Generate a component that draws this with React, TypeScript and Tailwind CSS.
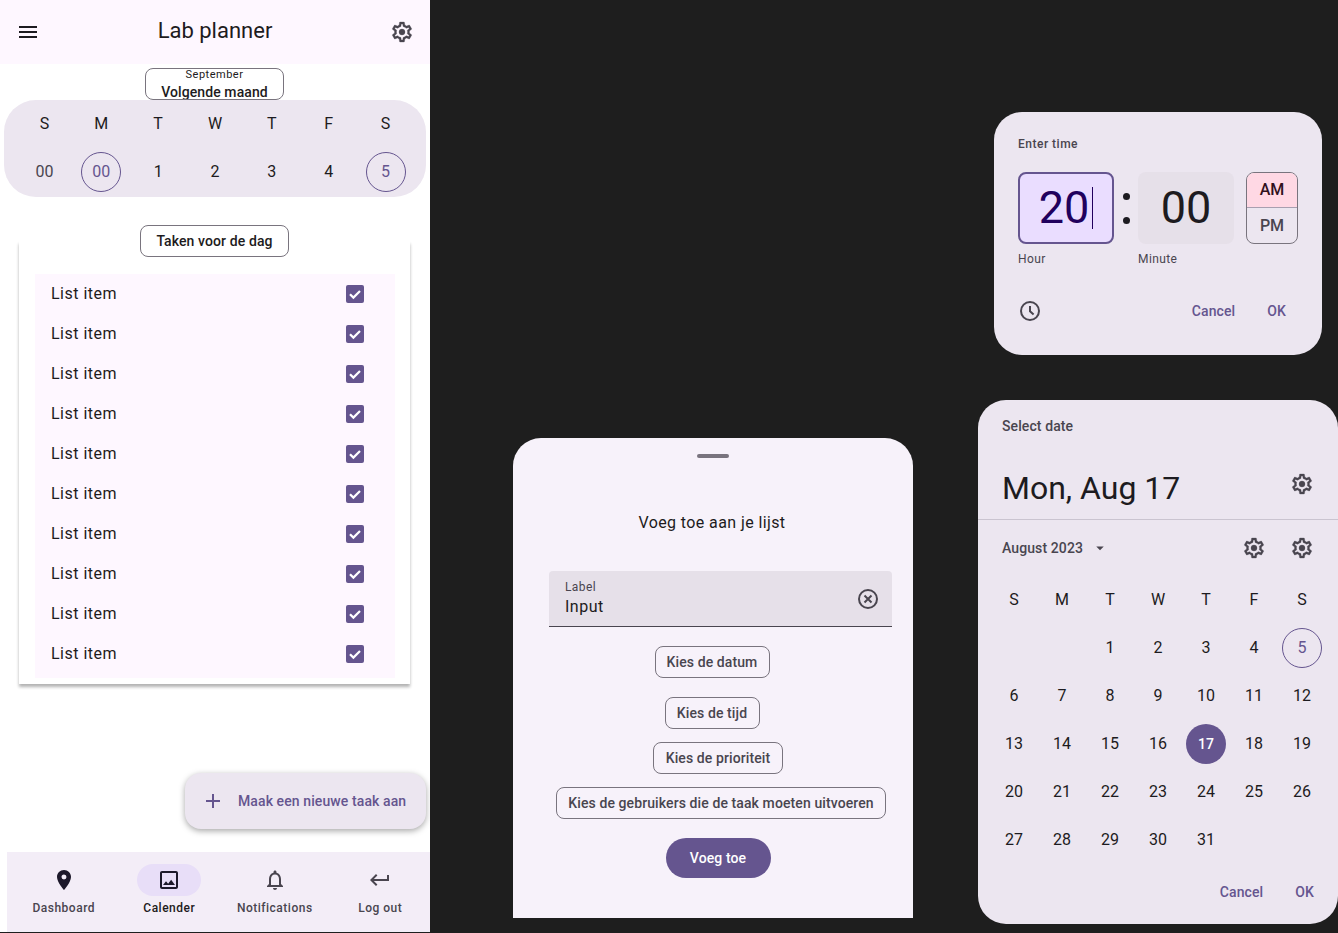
import {
  MdAdd,
  MdArrowDropDown,
  MdKeyboardReturn,
  MdMenu,
  MdOutlineImage,
  MdOutlineNotifications,
  MdPlace,
} from "react-icons/md";

const WEEK = ["S", "M", "T", "W", "T", "F", "S"];
const ITEMS = Array.from({ length: 10 }, (_, i) => i);
const MONTH = [
  "", "", 1, 2, 3, 4, 5,
  6, 7, 8, 9, 10, 11, 12,
  13, 14, 15, 16, 17, 18, 19,
  20, 21, 22, 23, 24, 25, 26,
  27, 28, 29, 30, 31, "", "",
];

// settings icon with a solid hub, like the one in the M3 kit
function Gear({ className = "" }: { className?: string }) {
  return (
    <svg viewBox="0 0 24 24" width={24} height={24} fill="currentColor" stroke="currentColor" strokeWidth={0.3} className={`text-[#49454f] ${className}`}>
      <path d="M19.43 12.98c.04-.32.07-.64.07-.98 0-.34-.03-.66-.07-.98l2.11-1.65c.19-.15.24-.42.12-.64l-2-3.46a.5.5 0 0 0-.61-.22l-2.49 1c-.52-.4-1.08-.73-1.69-.98l-.38-2.65A.488.488 0 0 0 14 2h-4c-.25 0-.46.18-.49.42l-.38 2.65c-.61.25-1.17.59-1.69.98l-2.49-1a.566.566 0 0 0-.18-.03c-.17 0-.34.09-.43.25l-2 3.46c-.13.22-.07.49.12.64l2.11 1.65c-.04.32-.07.65-.07.98 0 .33.03.66.07.98l-2.11 1.65c-.19.15-.24.42-.12.64l2 3.46a.5.5 0 0 0 .61.22l2.49-1c.52.4 1.08.73 1.69.98l.38 2.65c.03.24.24.42.49.42h4c.25 0 .46-.18.49-.42l.38-2.65c.61-.25 1.17-.59 1.69-.98l2.49 1c.06.02.12.03.18.03.17 0 .34-.09.43-.25l2-3.46c.12-.22.07-.49-.12-.64l-2.11-1.65zm-1.98-1.71c.04.31.05.52.05.73 0 .21-.02.43-.05.73l-.14 1.13.89.7 1.08.84-.7 1.21-1.27-.51-1.04-.42-.9.68c-.43.32-.84.56-1.25.73l-1.06.43-.16 1.13-.2 1.35h-1.4l-.19-1.35-.16-1.13-1.06-.43c-.43-.18-.83-.41-1.23-.71l-.91-.7-1.06.43-1.27.51-.7-1.21 1.08-.84.89-.7-.14-1.13c-.03-.31-.05-.54-.05-.74s.02-.43.05-.73l.14-1.13-.89-.7-1.08-.84.7-1.21 1.27.51 1.04.42.9-.68c.43-.32.84-.56 1.25-.73l1.06-.43.16-1.13.2-1.35h1.39l.19 1.35.16 1.13 1.06.43c.43.18.83.41 1.23.71l.91.7 1.06-.43 1.27-.51.7 1.21-1.07.85-.89.7.14 1.13z" />
      <circle cx="12" cy="12" r="3" />
    </svg>
  );
}

function Check() {
  return (
    <svg viewBox="0 0 18 18" width={18} height={18} fill="none" stroke="white" strokeWidth={2.2}>
      <path d="M4 9.2l3.4 3.4L14 6" />
    </svg>
  );
}

function ClockIcon() {
  return (
    <svg viewBox="0 0 24 24" width={24} height={24} fill="none" stroke="#49454f" strokeWidth={2}>
      <circle cx="12" cy="12" r="9" />
      <path d="M12 7v5.2l3.6 3.2" />
    </svg>
  );
}

function ClearIcon() {
  return (
    <svg viewBox="0 0 24 24" width={24} height={24} fill="none" stroke="#49454f" strokeWidth={2}>
      <circle cx="12" cy="12" r="9" />
      <path d="M8.5 8.5l7 7M15.5 8.5l-7 7" />
    </svg>
  );
}

function Outlined({ label, className }: { label: string; className: string }) {
  return (
    <div className={`h-8 flex items-center justify-center border border-[#79747e] rounded-lg text-sm font-medium tracking-[0.1px] text-[#49454f] ${className}`}>
      {label}
    </div>
  );
}

function NavItem({ icon, label, active }: { icon: React.ReactNode; label: string; active?: boolean }) {
  return (
    <div className="flex-1 flex flex-col items-center pt-3">
      <div className={`w-16 h-8 rounded-full flex items-center justify-center ${active ? "bg-[#e8def8] text-[#1d192b]" : "text-[#49454f]"}`}>
        {icon}
      </div>
      <div className={`mt-1 h-4 text-xs leading-4 font-medium tracking-[0.5px] whitespace-nowrap ${active ? "text-[#1d1b20]" : "text-[#49454f]"}`}>
        {label}
      </div>
    </div>
  );
}

function Planner() {
  return (
    <div className="absolute left-0 top-0 w-[430px] h-[932px] bg-white overflow-hidden">
      <div className="h-16 bg-[#fef7ff] flex items-center justify-between pl-4 pr-4 text-[#1d1b20]">
        <MdMenu size={24} />
        <div className="text-[22px] leading-7 -mt-[2px]">Lab planner</div>
        <Gear />
      </div>

      <div className="mt-1 ml-[145px] w-[139px] h-8 border border-[#79747e] rounded-lg flex flex-col items-center overflow-hidden text-[#1d1b20]">
        <div className="text-[11px] leading-[11px] tracking-[0.5px]">September</div>
        <div className="text-sm leading-5 font-medium tracking-[0.1px] mt-[2px]">Volgende maand</div>
      </div>

      <div className="mx-1 h-[97px] bg-[#ece6f0] rounded-[32px] px-[12px] grid grid-cols-7 grid-rows-[48px_48px] text-[#1d1b20]">
        {WEEK.map((d, i) => (
          <div key={i} className="flex items-center justify-center text-base">{d}</div>
        ))}
        <div className="flex items-center justify-center text-base text-[#49454f]">00</div>
        <div className="flex items-center justify-center">
          <div className="w-10 h-10 rounded-full border border-[#65558f] text-[#65558f] flex items-center justify-center text-base">00</div>
        </div>
        {[1, 2, 3, 4].map((n) => (
          <div key={n} className="flex items-center justify-center text-base">{n}</div>
        ))}
        <div className="flex items-center justify-center">
          <div className="w-10 h-10 rounded-full border border-[#65558f] text-[#65558f] flex items-center justify-center text-base">5</div>
        </div>
      </div>

      <div className="relative mt-[44px] ml-[19px] w-[391px] h-[443px] pt-[33px] pl-4 pr-[15px] bg-white shadow-[0_3px_3px_rgba(0,0,0,0.3)]">
        <div className="bg-[#fef7ff] h-[404px]">
          {ITEMS.map((i) => (
            <div key={i} className="h-10 flex items-center justify-between pl-4 pr-[31px] text-base tracking-[0.5px] text-[#1d1b20]">
              <span>List item</span>
              <div className="w-[18px] h-[18px] rounded-[2px] bg-[#65558f]">
                <Check />
              </div>
            </div>
          ))}
        </div>
        <div className="absolute left-[121px] -top-4 w-[149px] h-8 bg-white border border-[#79747e] rounded-lg flex items-center justify-center text-sm font-medium tracking-[0.1px] text-[#1d1b20]">
          Taken voor de dag
        </div>
      </div>

      <div className="absolute left-[185px] top-[773px] w-[241px] h-14 rounded-2xl bg-[#ece6f0] shadow-[0_2px_6px_rgba(0,0,0,0.35)] flex items-center pl-4 text-[#65558f]">
        <MdAdd size={24} />
        <span className="ml-[13px] text-sm font-medium tracking-[0.1px] whitespace-nowrap">Maak een nieuwe taak aan</span>
      </div>

      <div className="absolute left-[7px] right-0 bottom-0 h-20 bg-[#f3edf7]">
        <div className="ml-[4px] w-[422px] flex">
          <NavItem icon={<MdPlace size={24} className="text-[#1d192b]" />} label="Dashboard" />
          <NavItem icon={<MdOutlineImage size={24} />} label="Calender" active />
          <NavItem icon={<MdOutlineNotifications size={24} />} label="Notifications" />
          <NavItem icon={<MdKeyboardReturn size={24} />} label="Log out" />
        </div>
      </div>
    </div>
  );
}

function AddSheet() {
  return (
    <div className="absolute left-[513px] top-[438px] w-[400px] h-[480px] bg-[#f7f2fa] rounded-t-[28px] flex flex-col items-center">
      <div className="mt-4 w-8 h-1 rounded-full bg-[#79747e]" />
      <div className="mt-[53px] h-6 text-base leading-6 tracking-[0.4px] text-[#1d1b20] -translate-x-[1px]">Voeg toe aan je lijst</div>
      <div className="mt-[36px] w-[343px] h-14 self-start ml-9 bg-[#e6e0e9] rounded-t border-b border-[#49454f] flex items-center justify-between pl-4 pr-3">
        <div className="flex flex-col">
          <span className="text-xs leading-4 tracking-[0.4px] text-[#49454f]">Label</span>
          <span className="text-base leading-6 tracking-[0.5px] text-[#1d1b20]">Input</span>
        </div>
        <ClearIcon />
      </div>
      <Outlined label="Kies de datum" className="mt-[19px] w-[115px] -translate-x-[1px]" />
      <Outlined label="Kies de tijd" className="mt-[19px] w-[95px] -translate-x-[1px]" />
      <Outlined label="Kies de prioriteit" className="mt-[13px] w-[130px] translate-x-[5px]" />
      <Outlined label="Kies de gebruikers die de taak moeten uitvoeren" className="mt-[13px] w-[330px] translate-x-[8px]" />
      <div className="mt-[19px] w-[105px] h-10 rounded-full bg-[#65558f] text-white flex items-center justify-center text-sm font-medium tracking-[0.1px] translate-x-[5px]">
        Voeg toe
      </div>
    </div>
  );
}

function TimePicker() {
  return (
    <div className="absolute left-[994px] top-[112px] w-[328px] h-[243px] bg-[#ece6f0] rounded-[28px] pt-6 px-6">
      <div className="h-4 text-xs leading-4 font-medium tracking-[0.5px] text-[#49454f]">Enter time</div>
      <div className="mt-5 flex items-start">
        <div>
          <div className="w-24 h-[72px] bg-[#eaddff] border-2 border-[#65558f] rounded-lg flex items-center justify-center text-[45px] text-[#21005d]">
            <span>20</span>
            <span className="w-px h-[42px] bg-[#21005d] ml-[3px]" />
          </div>
          <div className="mt-[7px] text-xs leading-4 tracking-[0.4px] text-[#49454f]">Hour</div>
        </div>
        <div className="w-6 h-[72px] flex flex-col items-center justify-center gap-[17px]">
          <div className="w-[7px] h-[7px] rounded-full bg-[#1d1b20]" />
          <div className="w-[7px] h-[7px] rounded-full bg-[#1d1b20]" />
        </div>
        <div>
          <div className="w-24 h-[72px] bg-[#e6e0e9] rounded-lg flex items-center justify-center text-[45px] text-[#1d1b20]">00</div>
          <div className="mt-[7px] text-xs leading-4 tracking-[0.4px] text-[#49454f]">Minute</div>
        </div>
        <div className="ml-3 w-[52px] h-[72px] border border-[#79747e] rounded-lg overflow-hidden flex flex-col">
          <div className="h-[35px] bg-[#ffd8e4] text-[#31111d] flex items-center justify-center text-base font-medium border-b border-[#a89fb0]">AM</div>
          <div className="flex-1 text-[#49454f] flex items-center justify-center text-base font-medium">PM</div>
        </div>
      </div>
      <div className="mt-[32px] flex items-center justify-between pr-3">
        <ClockIcon />
        <div className="flex items-center gap-8 text-sm font-medium tracking-[0.1px] text-[#65558f]">
          <span>Cancel</span>
          <span>OK</span>
        </div>
      </div>
    </div>
  );
}

function DatePicker() {
  return (
    <div className="absolute left-[978px] top-[400px] w-[360px] h-[524px] bg-[#ece6f0] rounded-[28px] text-[#1d1b20]">
      <div className="h-[120px] border-b border-[#cac4d0] pl-6 pr-6 pt-4">
        <div className="h-5 text-sm leading-5 font-medium tracking-[0.1px] text-[#49454f]">Select date</div>
        <div className="mt-[32px] flex items-center justify-between">
          <span className="text-[32px] leading-10">Mon, Aug 17</span>
          <Gear className="-mt-2" />
        </div>
      </div>
      <div className="h-14 flex items-center pl-6 pr-6 text-[#49454f]">
        <span className="text-sm font-medium tracking-[0.1px]">August 2023</span>
        <MdArrowDropDown size={18} className="ml-[8px]" />
        <Gear className="ml-auto" />
        <Gear className="ml-6" />
      </div>
      <div className="px-3 grid grid-cols-7 auto-rows-[48px]">
        {WEEK.map((d, i) => (
          <div key={i} className="flex items-center justify-center text-base">{d}</div>
        ))}
        {MONTH.map((n, i) => (
          <div key={i} className="flex items-center justify-center text-base">
            {n === 5 ? (
              <div className="w-10 h-10 rounded-full border border-[#65558f] text-[#65558f] flex items-center justify-center">5</div>
            ) : n === 17 ? (
              <div className="w-10 h-10 rounded-full bg-[#65558f] text-white text-sm font-medium flex items-center justify-center">17</div>
            ) : (
              n
            )}
          </div>
        ))}
      </div>
      <div className="mt-[18px] flex justify-end gap-8 pr-6 text-sm font-medium tracking-[0.1px] text-[#65558f]">
        <span>Cancel</span>
        <span>OK</span>
      </div>
    </div>
  );
}

export default function App() {
  return (
    <div className="relative w-[1338px] h-[933px] overflow-hidden bg-[#1e1e1e] font-['Roboto',sans-serif]">
      <Planner />
      <AddSheet />
      <TimePicker />
      <DatePicker />
    </div>
  );
}
